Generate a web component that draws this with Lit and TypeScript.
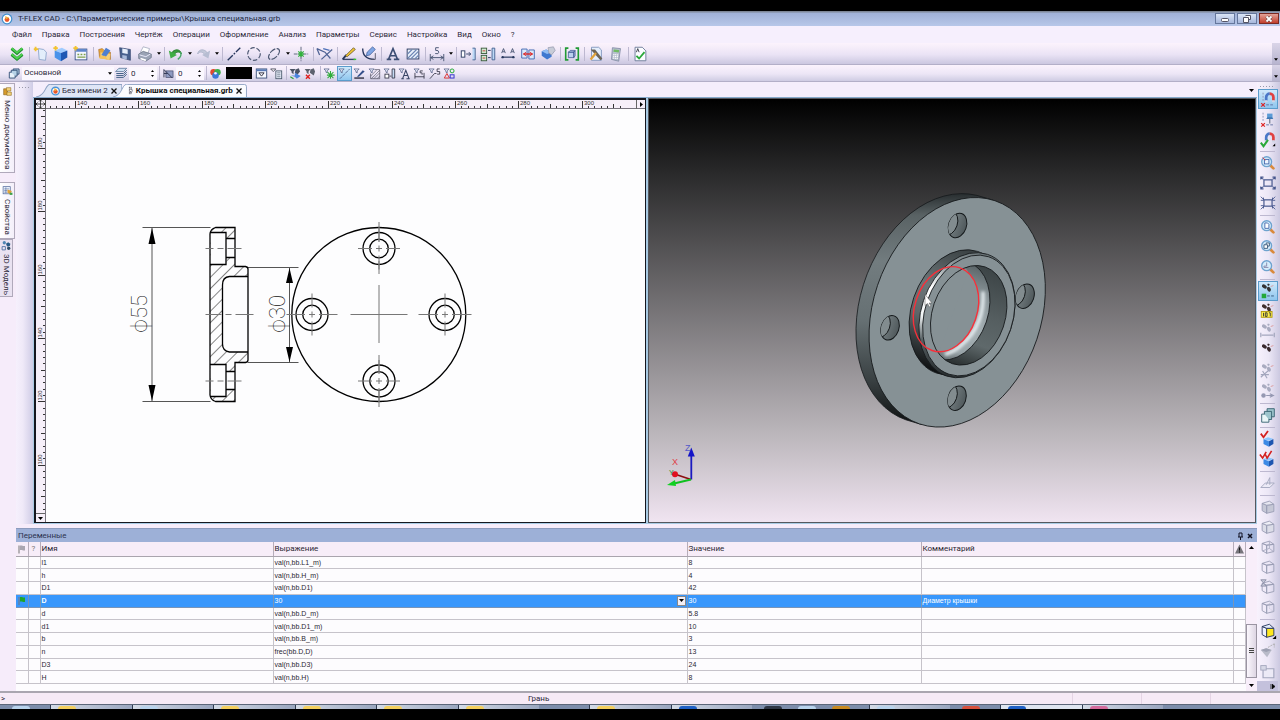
import { LitElement, html, svg, css } from "lit";
import { customElement, property } from "lit/decorators.js";

const N = "#26365c";
const filter = svg`<path d="M1.500 3h8l-3 3v3l-2-1v-2z" fill="#e8ecf8" stroke="#44507a"/>`;
const lens = svg`<path d="M12 12l4 4" stroke="#d98a3c" stroke-width="3" stroke-linecap="round"/><circle cx="8.500" cy="8.500" r="5.500" fill="#d5ecfb" stroke="#6fa3cf" stroke-width="1.500"/>`;
const feet = (c: string) => svg`<ellipse cx="6" cy="5" rx="3" ry="2" transform="rotate(30 6 5)" fill="${c}"/><ellipse cx="11" cy="8" rx="2.800" ry="2" transform="rotate(60 11 8)" fill="${c}"/><path d="M9.500 2.500l2 1" stroke="${c}" stroke-width="2"/><path d="M13 5l3-1" stroke="#d99" stroke-width="1"/>`;
const wire = (a: string, b: string, extra: unknown = "") => svg`<path d="M3.500 6l5 2v9l-5-3zM8.500 8l8-1v8l-8 2z" fill="${a}" stroke="#9a9db4"/><path d="M3.500 6l8-2.500 5 3.500-8 1z" fill="${b}" stroke="#9a9db4"/>${extra}`;
const cube = svg`<path d="M5 10l5-2 6 2-5 2z" fill="#8cc6ff"/><path d="M5 10l6 2.500v6l-6-3z" fill="#3c8ae6"/><path d="M11 12.500l5-2.500v5.500l-5 3z" fill="#1d56b0"/>`;
const magnet = svg`<path d="M8 12V8a4 4 0 0 1 4-4" fill="none" stroke="#4a78c8" stroke-width="3"/><path d="M12 4a4 4 0 0 1 4 4v4" fill="none" stroke="#e04040" stroke-width="3"/><path d="M6.500 12.500h3M14.500 12.500h3" stroke="#cfd6e6" stroke-width="2"/>`;
const snap = svg`<path d="M4.500 3v10" stroke="#8a93b5" stroke-dasharray="2 1.500"/><path d="M8 16.500h9" stroke="#5d6da0" stroke-dasharray="3 1.500"/><path d="M2.500 14.500l4 4m0-4l-4 4" stroke="#d22" stroke-width="1.300"/>`;

const icons: Record<string, unknown> = {
  logo: svg`<circle cx="10" cy="10" r="9" fill="#3f8fce"/><circle cx="10" cy="10" r="7" fill="#fff"/><circle cx="10" cy="11" r="4" fill="#e8552a"/><path d="M7 5l6 3-5 3z" fill="#f4b23c"/>`,
  chev: svg`<path d="M4 4l6 5 6-5M4 10.500l6 5 6-5" fill="none" stroke="#1c8e2c" stroke-width="3.500"/><path d="M4 3.500l6 5 6-5M4 10l6 5 6-5" fill="none" stroke="#4fd050" stroke-width="2"/>`,
  page: svg`<path d="M7 4l6 1 3 3-1 9-7-1z" fill="#e3eefb" stroke="#8fa6cc"/><path d="M4 2v5M2 4.500h5" stroke="#f2c230" stroke-width="2"/>`,
  cube3: svg`<path d="M3 6l8-3 6 3-7 3z" fill="#9fcbff"/><path d="M3 6l7 3v9l-7-4z" fill="#4a93ea"/><path d="M10 9l7-3v8l-7 4z" fill="#1f58b4"/><path d="M4 1v5M1.500 3.500h5" stroke="#f2c230" stroke-width="2"/>`,
  win: svg`<rect x="3.500" y="4.500" width="13" height="12" fill="#f4f7ff" stroke="#3c5488"/><path d="M4 6h12" stroke="#5f86cc" stroke-width="3"/><path d="M6 10.500h2m1.500 0h2m1.500 0h2M6 13.500h9" stroke="#7fa04c" stroke-width="1.500"/><path d="M4 1v5M1.500 3.500h5" stroke="#f2c230" stroke-width="2"/>`,
  open: svg`<path d="M3 5l4-1 2 2 7 2v8l-12-2z" fill="#e8a63c" stroke="#a56a1c" stroke-width=".7"/><path d="M5 8l11 2-1 7-10-3z" fill="#f7cf76"/><path d="M11 3l5 3-5 7-5-2z" fill="#4f7fd0"/><path d="M3 13l7-1 3 4-9-1z" fill="#f3c25c"/>`,
  save: svg`<path d="M4 3l12 2v12l-11-3z" fill="#48618f" stroke="#2b3d66" stroke-width=".7"/><path d="M7 4l6 1v5l-6-1z" fill="#e6eefb"/><path d="M7 11l5 1v4l-5-1z" fill="#a9bbdc"/>`,
  print: svg`<path d="M8 2l7 2-2 6-8-2z" fill="#fff" stroke="#8a94aa" stroke-width=".7"/><path d="M3 10l5-3 9 3v4l-6 4-8-3z" fill="#9aa3b5" stroke="#5a6478" stroke-width=".7"/><path d="M4 11l7 2 5-3" stroke="#eef" fill="none"/><path d="M5 15l6 2" stroke="#fff" stroke-width="2"/>`,
  undo: svg`<path d="M5 9c3-5 10-5 11 1-2-3-6-3-8 1" fill="#3aa03f" stroke="#267a2c"/><path d="M2 6l2 9 7-4z" fill="#3fae45"/><path d="M15 8q2 4-3 8" stroke="#48a868" stroke-width="1.500" fill="none"/>`,
  redo: svg`<path d="M15 9c-3-5-10-5-11 1 2-3 6-3 8 1" fill="#c3c8da" stroke="#aeb4ca"/><path d="M18 6l-2 9-7-4z" fill="#b7bdd2"/>`,
  line: svg`<path d="M3 17L17 3" stroke="${N}" stroke-width="1.500" stroke-dasharray="8 1.500 2 1.500"/>`,
  circ: svg`<circle cx="10" cy="10" r="7" fill="none" stroke="#4d5872" stroke-width="1.300" stroke-dasharray="5 2"/>`,
  ell: svg`<ellipse cx="10" cy="10" rx="7.500" ry="4" transform="rotate(-45 10 10)" fill="none" stroke="#4d5872" stroke-width="1.300" stroke-dasharray="7 1.500"/>`,
  cross: svg`<path d="M10 2v16M2 10h16" stroke="#555e75" stroke-dasharray="4 1"/><path d="M7 7l6 6m0-6l-6 6M10 6.500v7M6.500 10h7" stroke="#2fb23a" stroke-width="1.300"/>`,
  trim: svg`<path d="M1 4l3 7M1 4l9 4l6 7M6 16L18 5" fill="none" stroke="#4e6294" stroke-width="1.400"/><path d="M8 4l7 2" stroke="#4e70b8" stroke-width="1.400"/>`,
  pen: svg`<path d="M3 16h14" stroke="#384468" stroke-width="1.500"/><path d="M3 16l4-5" stroke="${N}" stroke-width="2"/><path d="M6 12l9-9 2 2-9 8z" fill="#f0c435" stroke="#584a20" stroke-width=".8"/><path d="M15 16h3" stroke="#3c3" stroke-width="1.500"/>`,
  spline: svg`<path d="M3 4q0 12 13 12" fill="none" stroke="${N}" stroke-width="1.500"/><path d="M7 12l1-4 6-6 3 3-6 6z" fill="#7fa5e4" stroke="#3c5a94" stroke-width=".8"/><path d="M17 9v7h-5" fill="none" stroke="#556"/>`,
  bigA: svg`<path d="M3 16h5M11 16h6M5 16L10 4l5 12M7 12h6" fill="none" stroke="#3d4e74" stroke-width="1.800"/>`,
  hatch: svg`<rect x="3.500" y="4.500" width="13" height="11" fill="#eaf1fb" stroke="${N}"/><path d="M4 10l5-5M4 15l10-10M8 15l8-8M12.500 15l4-4" stroke="#6d86b4" stroke-width="1.200"/>`,
  dim: svg`<path d="M2.500 10v8M17.500 10v8M3 14h14M6 12l-3 2 3 2M14 12l3 2-3 2" fill="none" stroke="#44506e"/><path d="M12 3H8.500v3q3.500-.5 3.500 2t-4 1.500" fill="none" stroke="#44506e"/>`,
  ins1: svg`<rect x="2.500" y="6.500" width="4" height="7" fill="#fff" stroke="${N}"/><path d="M8 10h5M11 8l2 2-2 2" fill="none" stroke="${N}"/><path d="M15 3.500h3v13h-3" fill="#bcd8f6" stroke="#44608f"/>`,
  ins2: svg`<rect x="2.500" y="3.500" width="6" height="6" fill="#cfe8cf" stroke="#3b5a3b"/><rect x="2.500" y="11.500" width="6" height="6" fill="#cfe8cf" stroke="#3b5a3b"/><path d="M4 6.500h3M4 14.500h3" stroke="#c33"/><path d="M10 6h3M10 14h3" stroke="${N}"/><path d="M14.500 3.500h3v13h-3z" fill="#bcd8f6" stroke="#44608f"/>`,
  aa: svg`<path d="M3 9l2-5 2 5M13 9l2-5 2 5M4 7.500h2m8 0h2" fill="none" stroke="#44506e"/><path d="M4 13.500h12" stroke="${N}" stroke-width="1.300"/><circle cx="4" cy="13.500" r="1.300" fill="${N}"/><circle cx="16" cy="13.500" r="1.300" fill="${N}"/>`,
  link: svg`<path d="M3 4.500h6v10H3zM11 5.500h6v10h-6z" fill="#dbe9fb" stroke="#3f65b0"/><path d="M5 10h10" stroke="#d22" stroke-width="1.500"/><path d="M8 8l-3 2 3 2M12 8l3 2-3 2" fill="none" stroke="#d22"/>`,
  part: svg`<path d="M3 7l5-2 6 3v5l-5 3-6-4z" fill="#3f78d0"/><path d="M3 7l5-2 6 3-5 2z" fill="#91bdf3"/><path d="M10 3l6-1 2 4-4 5-3-2z" fill="#c8ccd8" stroke="#8a90a4" stroke-width=".7"/>`,
  frame: svg`<path d="M6 3.500H3v13h3M14 3.500h3v13h-3" fill="none" stroke="#229a34" stroke-width="1.800"/><path d="M6 8l2-2h5l-1 2zM6 8h6v6H6zM12 8l1.500-2v6L12 14z" fill="#bcd0ee" stroke="#3a5590" stroke-width=".8"/>`,
  tool: svg`<path d="M5 2.500h8l3 3V17H5z" fill="#e4eefc" stroke="#8095bc"/><path d="M4 5l5 0 8 10-2 2z" fill="#6b6458"/><path d="M4 16l6-7" stroke="#e0a23a" stroke-width="2.500"/>`,
  calc: svg`<path d="M6 3l9 1-2 14-8-2z" fill="#b8c0cf" stroke="#77819a" stroke-width=".8"/><path d="M7.500 5l6 .6-.4 2.600-6-.6z" fill="#6fbb62"/><path d="M7 10.500l5.500.6M6.800 12.500l5.500.6M6.500 14.500l5.500.6" stroke="#fff" stroke-width="1.200" stroke-dasharray="1.300 .8"/>`,
  check: svg`<path d="M4.500 2.500h8l4 4v11h-12z" fill="#fbfcff" stroke="#6a7896"/><path d="M6 8l1.500-4L9 8" fill="none" stroke="#334"/><path d="M6 12l3 3 6-7" fill="none" stroke="#2aa83a" stroke-width="2"/>`,
  layer: svg`<path d="M2 8h9v9H2z" fill="#e8f2fa" stroke="#2f4c74" stroke-width="1.400"/><path d="M5 8V5h9v9h-3M8 5V3h9v8h-3" fill="#b6d2e6" stroke="#2f4c74" stroke-width="1.400"/>`,
  levels: svg`<path d="M2 16h11l5-5M2 13h11l5-5M2 10h11l5-5" fill="none" stroke="#3e5e84" stroke-width="1.500"/><path d="M6 2h12l-5 5H1z" fill="#cfe2f3" stroke="#3e5e84"/>`,
  prio: svg`<rect x="6" y="6" width="11" height="10" fill="#8e9ac0" stroke="#3b4264"/><path d="M3 4l13 13M3 10h6M3 4v12" stroke="#333a55" stroke-width="1.500"/>`,
  rgb: svg`<circle cx="7" cy="8" r="5" fill="#e0492f"/><circle cx="13" cy="8" r="5" fill="#3cae49"/><circle cx="10" cy="13" r="5" fill="#3c78d8"/><circle cx="10" cy="9.500" r="2" fill="#eef"/>`,
  fwin: svg`<rect x="2" y="3" width="16" height="14" fill="#f7f9ff" stroke="#44577f" stroke-width="1.500"/><path d="M2 5h16" stroke="#5779b5" stroke-width="3"/><path d="M6 9h8l-4 5z" fill="none" stroke="#334" stroke-width="1.500"/>`,
  flist: svg`<path d="M1 3h8L5 7z" fill="#fff" stroke="#445" stroke-width="1.300"/><rect x="9" y="6" width="9" height="12" fill="#e8eefa" stroke="#456" stroke-width="1.300"/><path d="M11 9h5m-5 3h5m-5 3h5" stroke="#456"/>`,
  fgo: svg`<path d="M1 3h9L7 7v4L4 9V7zM10 4l5-2 2 5-4 5-4-3z" fill="#4a5364"/><path d="M3 13h6V9l9 5-6 4-3-3" fill="#4c86dd"/><path d="M2 15l5 3" stroke="#2d9e3a" stroke-width="2"/>`,
  fdel: svg`<path d="M1 3h9L7 7v4L4 9V7zM10 4l5-2 2 5-2 6-6-4z" fill="#5c626e"/><path d="M3 12l6 6m0-6l-6 6" stroke="#e02020" stroke-width="2.200"/>`,
  f1: svg`${filter}<path d="M7 8l9 9m0-9l-9 9M11.500 6v12M6 12.500h12" stroke="#2fae3a" stroke-width="1.600"/>`,
  f2: svg`${filter}<path d="M3 18L18 3" stroke="#4a5f8c" stroke-width="1.300" stroke-dasharray="5 1"/>`,
  f3: svg`${filter}<path d="M2 17h15" stroke="#223" stroke-width="2"/><path d="M6 15l9-10 3 2-9 8z" fill="#35508a"/>`,
  f4: svg`${filter}<path d="M10 4h8v14H4v-8" fill="none" stroke="#445"/><path d="M4 14l9-9M5 18L18 5M9 18l9-9M14 18l4-4" stroke="#556"/>`,
  f5: svg`${filter}<rect x="3" y="11" width="6" height="6" fill="#fff" stroke="#334" stroke-width="1.300"/><path d="M14 3h4v14h-4zM10 14h3" fill="#c6dbf4" stroke="#334" stroke-width="1.300"/>`,
  f6: svg`${filter}<path d="M5 18h4m4 0h5M7 18l5-13 5 13M9 13h6" fill="none" stroke="#3a4666" stroke-width="1.600"/>`,
  f7: svg`${filter}<path d="M3 9v9m14-9v9M3 15h14M15 6h-4v3h3v3" fill="none" stroke="#334" stroke-width="1.300"/>`,
  f8: svg`${filter}<path d="M3 18l7-8h3M18 3h-4v4h4v4h-4" fill="none" stroke="#334" stroke-width="1.300"/>`,
  f9: svg`${filter}<path d="M2 17l4-7 4 7z" fill="none" stroke="#d33" stroke-width="1.500"/><circle cx="14" cy="6" r="3" fill="none" stroke="#2a3" stroke-width="1.500"/><rect x="11" y="12" width="6" height="5" fill="none" stroke="#33c" stroke-width="1.500"/>`,
  mag1: svg`${magnet}${snap}`,
  pin: svg`${snap}<path d="M9 4h6v5H9z" fill="#5b9bd6"/><path d="M8 10h8l-1.500-2h-5z" fill="#3f78b4"/><path d="M12 10v5" stroke="#456"/>`,
  mag2: svg`${magnet}<path d="M2 14l3 4 5-7" fill="none" stroke="#2aa83a" stroke-width="2.200"/><path d="M18 15v3h-3z" fill="#000"/>`,
  zoomw: svg`${lens}<rect x="6" y="6" width="5" height="5" fill="#eaf4ff" stroke="#46a"/><path d="M4 4l3 3" stroke="#d33"/>`,
  fit: svg`<rect x="5.500" y="6.500" width="9" height="7" fill="none" stroke="#44558c" stroke-width="1.300"/><path d="M5 6L2 4M15 6l3-2M5 14l-3 2M15 14l3 2M2 6V3.500h3M18 6V3.500h-3M2 14v2.500h3M18 14v2.500h-3" stroke="#44558c" stroke-width="1.200" fill="none"/>`,
  fit2: svg`<rect x="5.500" y="6.500" width="9" height="7" fill="none" stroke="#44558c" stroke-width="1.300"/><path d="M2 3l3 3M18 3l-3 3M2 17l3-3M18 17l-3-3M2 7h3V4M18 7h-3V4M2 13h3v3M18 13h-3v3" stroke="#44558c" fill="none"/>`,
  zpage: svg`${lens}<path d="M6.500 5.500h3l1.500 1.500v4.500H6.500z" fill="#fff" stroke="#46a"/>`,
  zwin: svg`${lens}<path d="M5.500 7.500h4v4h-4zM8 7V5.500h3.500V9H10" fill="#fff" stroke="#357"/>`,
  zback: svg`${lens}<path d="M8.500 5v4H5.500v1.500h5" fill="none" stroke="#88a"/>`,
  feet1: svg`${feet("#333")}<rect x="3" y="13" width="5" height="5" fill="#22a83a"/><path d="M9 15.500h8" stroke="#357" stroke-dasharray="3 1.500"/>`,
  feet2: svg`${feet("#40302e")}<rect x="2.500" y="10.500" width="12" height="6.500" fill="#fff04a" stroke="#b09a10"/><path d="M5 12v4M7 12h2v4H7zM11 12h1.500v4" fill="none" stroke="#333"/>`,
  feet3: svg`${feet("#a9abc0")}<path d="M2 12v5M17 12v5M3 14.500h13" stroke="#a3a6bd" stroke-width="1.300"/>`,
  feet4: svg`${feet("#3a2a2e")}`,
  feet5: svg`${feet("#a9abc0")}<path d="M2 17l9-8M4 10l5 8M2 14h9" stroke="#a3a6bd" stroke-width="1.300"/>`,
  feet6: svg`${feet("#a9abc0")}<circle cx="5" cy="15" r="2.500" fill="#9598b2"/><path d="M8 15h7M12 13l4 2-4 2" fill="none" stroke="#9598b2" stroke-width="1.300"/>`,
  stack: svg`<path d="M3 9h8v9H3z" fill="#eaf6f8" stroke="#33606e"/><path d="M6 9V6h8v9h-3M9 6V3h8v9h-3" fill="#9cc4cc" stroke="#33606e"/>`,
  chk1: svg`${cube}<path d="M2 4l3 4 5-7" fill="none" stroke="#d32020" stroke-width="2"/>`,
  chk2: svg`${cube}<path d="M1 5l3 4 4-7M7 5l2 4 5-8" fill="none" stroke="#d32020" stroke-width="1.800"/>`,
  plane: svg`<path d="M2 15h10l5-5H7zM8 12l4-8v8" fill="#eceaf6" stroke="#a3a6bd"/>`,
  w1: wire("#c6c8d6", "#e6e6f0"), w2: wire("#dcdde8", "#eeeef6"),
  w3: wire("none", "none", svg`<path d="M11.500 3.500v8l5 4M11.500 11.500l-8 3" stroke="#a9acc2" fill="none"/>`),
  w4: wire("none", "none"),
  w5: wire("none", "none", svg`<path d="M2 2h6L2 9h6z" fill="#c8cada" stroke="#8a8da6"/>`),
  w6: wire("none", "none", svg`<path d="M11.500 3.500v8l5 4" stroke="#c0c2d2" stroke-dasharray="1 1" fill="none"/>`),
  ycube: svg`<path d="M3.500 5l5 2v10l-5-3z" fill="#eef2ff" stroke="${N}"/><path d="M8.500 7h8v8l-8 2z" fill="#ffe81e" stroke="${N}"/><path d="M3.500 5l8-2.500 5 4.500-8 0z" fill="#e2eafa" stroke="${N}"/><path d="M19 15v4h-4z" fill="#000"/>`,
  arrowd: svg`<path d="M2 9l6-2 6 2-5 8z" fill="#b9bbc9"/><path d="M2 9l6-2 6 2-6 2z" fill="#9da0b2"/><path d="M10 6l7-4M17 2v4" stroke="#aaa" stroke-dasharray="2 1"/>`,
  boxp: svg`<path d="M4.500 7.500h12v10h-12z" fill="#eceaf6" stroke="#a3a6bd" stroke-width="1.300"/><rect x="2" y="4" width="6" height="5" fill="#d7d8e6" stroke="#a3a6bd"/>`,
  doc: svg`<circle cx="10" cy="11" r="7" fill="#fff" stroke="#4a94d8" stroke-width="2.500"/><circle cx="10" cy="12" r="4" fill="#e8552a"/><path d="M8 5l5 4-5 3z" fill="#f4b23c"/>`,
  flange: svg`<path d="M6 1v18M6 2h5v4H7M7 14h4v4H6M6 7h7v6H7" fill="none" stroke="#334" stroke-width="1.600" stroke-dasharray="3 1"/>`,
  docs: svg`<path d="M3 5h7v11H3z" fill="#d79b2c" stroke="#7c5a16"/><path d="M8 3h8v6H8zM9 11h8v6H9z" fill="#f3d37a" stroke="#8a6416"/>`,
  props: svg`<rect x="2" y="3" width="13" height="13" fill="#eaf1fc" stroke="#51689a" stroke-width="1.300"/><path d="M4 7h9M4 10h6M4 13h6M7 4v11" stroke="#51689a"/><path d="M10 8l8 3-3 6-5-3z" fill="#e0a23a"/><path d="M14 14h5v4h-5z" fill="#3fa24a"/>`,
  model: svg`<path d="M2 12h6v6H2z" fill="none" stroke="#43699c" stroke-width="1.500"/><path d="M9 7l4-3 4 3-1 4-5 1z" fill="#285a86"/><circle cx="6" cy="5" r="3" fill="#4f86b4"/><circle cx="14" cy="15" r="3" fill="#2c4b66"/>`,
};
const ic = (n: string) => html`<svg class="ic" viewBox="0 0 20 20" aria-hidden="true">${icons[n]}</svg>`;
const tri = html`<svg class="tri" viewBox="0 0 5 3" aria-hidden="true"><path d="M0 0h5L2.500 3z"/></svg>`;

const shared = css`
  :host, * { box-sizing: border-box; }
  button, input, select { font: inherit; color: inherit; border: 0; padding: 0; margin: 0; background: none; border-radius: 0; min-width: 0; outline: 0; }
  svg { display: block; }
  .ic { width: 100%; height: 100%; }
  .tri { width: 5px; height: 3px; flex: none; }
`;

@customElement("cad-drawing")
class CadDrawing extends LitElement {
  static styles = [shared, css`
    :host { display: grid; grid-template: 9px minmax(0, 1fr) / 10px minmax(0, 1fr); background: #fdfdfe; border: 2px solid #15171f; border-width: 2px 1px 1px 2px; min-width: 0; min-height: 0; overflow: hidden; }
    .corner { border: solid #555; border-width: 0 1px 1px 0; background: #f6f1fa; }
    .top, .left { display: flex; background: #f6eff9; min-width: 0; min-height: 0; }
    .top { border-bottom: 1px solid #77737e; }
    .left { border-right: 1px solid #77737e; flex-direction: column; }
    .scale { flex: 1; min-width: 0; min-height: 0; overflow: hidden; }
    .scale svg { width: 100%; height: 100%; }
    .scale text { font: 6px "Liberation Sans", sans-serif; fill: #333; }
    .scale path { stroke: #333; }
    .end { display: grid; place-items: center; width: 9px; height: 9px; border-left: 1px solid #666; }
    .left .end { border-left: 0; border-top: 1px solid #666; }
    .end svg { width: 5px; height: 5px; }
    .sheet { width: 100%; height: 100%; min-height: 0; }
    .thin { stroke: #555; stroke-width: 1; fill: none; }
    .axis { stroke: #777; stroke-width: 1; fill: none; }
    .thick { stroke: #000; stroke-width: 1.300; fill: none; }
    .size { font: 100 22px Roboto, "Noto Sans", sans-serif; fill: #111; }
  `];
  render() {
    const xs = Array.from({ length: 91 }, (_, i) => i - 4);
    const ys = Array.from({ length: 65 }, (_, i) => i - 6);
    return html`
      <div class="corner"><svg viewBox="0 0 9 8"><path d="M4.500 0v8M0 4h9M3 1.500L4.500 0 6 1.500M3 6.500L4.500 8 6 6.500M1.500 2.500L0 4l1.500 1.500M7.500 2.500L9 4 7.500 5.500" stroke="#222" stroke-width=".8" fill="none"/></svg></div>
      <div class="top">
        <div class="scale"><svg>${xs.map((i) => {
          const x = Math.round(29 + i * 6.333) + 0.5;
          const h = i % 10 === 0 ? 7 : i % 5 === 0 ? 4 : 2;
          return svg`<path d="M${x} 8v${-h}"/>${i % 10 === 0 ? svg`<text x=${x + 1.5} y="5">${140 + i * 2}</text>` : ""}`;
        })}</svg></div>
        <div class="end"><svg viewBox="0 0 5 5"><path d="M1 0l3 2.500L1 5z"/></svg></div>
      </div>
      <div class="left">
        <div class="scale"><svg>${ys.map((i) => {
          const y = Math.round(39 + i * 6.333) + 0.5;
          const h = i % 10 === 0 ? 7 : i % 5 === 0 ? 4 : 2;
          return svg`<path d="M9 ${y}h${-h}"/>${i % 10 === 0 && i < 60 ? svg`<text transform="translate(6 ${y - 1}) rotate(-90)">${200 - i * 2}</text>` : ""}`;
        })}</svg></div>
        <div class="end"><svg viewBox="0 0 5 5"><path d="M0 1h5L2.500 4z"/></svg></div>
      </div>
      <svg class="sheet" viewBox="46 109 598 413" role="img" aria-label="Чертёж">
        <defs><pattern id="h" width="8" height="8" patternUnits="userSpaceOnUse" patternTransform="rotate(45)"><path d="M.5 0v8" stroke="#777" stroke-width=".9"/></pattern></defs>
        <path fill="url(#h)" d="M214 227.500H234.500V239H226V232H210V264H226V257H234.500V266.500H247.500V276.500H229Q222 278 222 285V344Q222 351 229 352H247.500V362.500H234.500V371H226V364H210V396H226V390H234.500V401.500H214L209.500 396V233z"/>
        <path class="thin" d="M142 227.500H210M142 401.500H210M151.500 228V401M247 267.500H298M247 362.500H298M289 268V362"/>
        <path d="M151.500 228l-3.500 16h7zM151.500 401l-3.500-16h7zM289 268l-3.500 15h7zM289 362l-3.500-15h7z"/>
        <path class="thick" d="M215 227.500H234.500V266.500H245Q247.500 267 247.500 269V360Q247.500 362 245 362.500H234.500V401.500H215Q210 400 209.500 395V234Q210 229 215 227.500zM209.500 232.500H225.500V264.500H209.500M225.500 238.500H234.500M225.500 257.500H234.500M209.500 364.500H225.500V396.500H209.500M225.500 371.500H234.500M225.500 389.500H234.500M247.500 276.500H229Q222 277 222 285V344Q222 351 229 352H247.500"/>
        <circle class="thick" cx="378.300" cy="314.500" r="87"/>
        ${[[378.5, 248.5], [378.5, 381], [311.5, 314.5], [444.5, 314.5]].map(([x, y]) => svg`
          <circle class="thick" cx=${x} cy=${y} r="16"/><circle class="thick" cx=${x} cy=${y} r="9.300"/>
          <path class="axis" d="M${x - 21} ${y}h14m4 0h6m4 0h14M${x} ${y - 21}v14m0 4v6m0 4v14"/>`)}
        <path class="axis" d="M205 248.500h8m4 0h6m4 0h14M205 381h8m4 0h6m4 0h14M205 314.500h16m4 0h6m4 0h18M378.500 222v20M378.500 261v13M378.500 285v58M378.500 355v18M378.500 390v17M286 314.500h18M325 314.500h12M350 314.500h57M418 314.500h14M455 314.500h16"/>
        <text class="size" transform="translate(146 333) rotate(-90)">ϕ55</text>
        <text class="size" transform="translate(284 333) rotate(-90)">ϕ30</text>
      </svg>`;
  }
}

@customElement("cad-scene")
class CadScene extends LitElement {
  static styles = [shared, css`
    :host { display: block; min-width: 0; min-height: 0; overflow: hidden; background: linear-gradient(#000, #2d2d2e 19%, #bdb8bd 80%, #f0e4f1); border: 1px solid #55585f; }
    .view { width: 100%; height: 100%; }
    .edge { stroke: #14181a; stroke-width: .8; fill: none; }
    .face { stroke: #14181a; stroke-width: .8; fill: #869195; }
    .lbl { font: 9px "Liberation Sans", sans-serif; }
    .z { fill: #5458c8; } .x { fill: #e04048; } .y { fill: #2a9030; font-size: 7px; }
  `];
  render() {
    const holes = [[957.5, 226], [890, 328.3], [1025, 296.7], [957, 398.7]];
    return html`<svg class="view" viewBox="649 100 606 422" role="img" aria-label="3D">
      <defs>
        <linearGradient id="side" x1="0" y1="192" x2="0" y2="427" gradientUnits="userSpaceOnUse"><stop offset="0" stop-color="#23282a"/><stop offset=".1" stop-color="#596264"/><stop offset=".3" stop-color="#727c7f"/><stop offset=".55" stop-color="#667073"/><stop offset=".8" stop-color="#3a4143"/><stop offset="1" stop-color="#0c0e0f"/></linearGradient>
        <linearGradient id="boss" x1="0" y1="250" x2="0" y2="378" gradientUnits="userSpaceOnUse"><stop offset="0" stop-color="#3a4143"/><stop offset=".35" stop-color="#6c7679"/><stop offset=".6" stop-color="#5d6669"/><stop offset="1" stop-color="#0c0e0f"/></linearGradient>
        <linearGradient id="rim" x1="0" y1="253" x2="0" y2="378" gradientUnits="userSpaceOnUse"><stop offset="0" stop-color="#6d777a"/><stop offset=".2" stop-color="#9aa4a8"/><stop offset=".38" stop-color="#fff"/><stop offset=".62" stop-color="#f2f6f7"/><stop offset=".8" stop-color="#5a6366"/><stop offset="1" stop-color="#2b3133"/></linearGradient>
        <linearGradient id="bore" x1="0" y1="266" x2="0" y2="366" gradientUnits="userSpaceOnUse"><stop offset="0" stop-color="#3d4547"/><stop offset=".45" stop-color="#555e60"/><stop offset=".75" stop-color="#5f696b"/><stop offset="1" stop-color="#2c3233"/></linearGradient>
        <linearGradient id="fil" x1="0" y1="262" x2="0" y2="364" gradientUnits="userSpaceOnUse"><stop offset="0" stop-color="#5d676a"/><stop offset=".25" stop-color="#8b969a"/><stop offset=".6" stop-color="#a5b0b4"/><stop offset=".85" stop-color="#98a3a7"/><stop offset="1" stop-color="#4e5759"/></linearGradient>
        <linearGradient id="hole" x1="0" x2="1"><stop offset="0" stop-color="#7a8487"/><stop offset="1" stop-color="#4f585b"/></linearGradient>
        <filter id="soft" x="-30%" y="-30%" width="160%" height="160%"><feGaussianBlur stdDeviation="1.800"/></filter>
        <clipPath id="bc"><ellipse cx="968.700" cy="315.800" rx="36.500" ry="51.100" transform="rotate(18.700 968.700 315.800)"/></clipPath>
        ${holes.map(([x, y], i) => svg`<clipPath id="c${i}"><ellipse cx=${x} cy=${y} rx="8.900" ry="12.600" transform="rotate(18.700 ${x} ${y})"/></clipPath>`)}
      </defs>
      <g fill="url(#side)">
        <path stroke="#14181a" stroke-width=".8" d="M992.800 200.600L977 195.900A84.100 117.800 18.700 0 0 905.800 420.300L921.600 425z"/>
      </g>
      <ellipse class="face" cx="957.200" cy="312.800" rx="84.100" ry="117.800" transform="rotate(18.700 957.200 312.800)"/>
      ${holes.map(([x, y], i) => svg`
        <ellipse cx=${x} cy=${y} rx="8.900" ry="12.600" transform="rotate(18.700 ${x} ${y})" fill="url(#hole)" stroke="#14181a"/>
        <g clip-path="url(#c${i})"><ellipse cx=${x - 9} cy=${y - 2.5} rx="8.900" ry="12.600" transform="rotate(18.700 ${x - 9} ${y - 2.5})" fill="#828c8f" stroke="#14181a" stroke-width=".9"/></g>`)}
      <ellipse fill="url(#boss)" stroke="#14181a" stroke-width=".8" cx="957.200" cy="312.800" rx="45.900" ry="64.200" transform="rotate(18.700 957.200 312.800)"/>
      <path fill="url(#boss)" d="M976.600 251.700L986.400 254.600L947.600 376.800L937.800 373.900z"/>
      <ellipse fill="url(#rim)" stroke="#14181a" stroke-width=".8" cx="967" cy="315.700" rx="45.900" ry="64.200" transform="rotate(18.700 967 315.700)"/>
      <ellipse class="face" cx="968.800" cy="316" rx="44" ry="62" transform="rotate(18.700 968.800 316)"/>
      <ellipse fill="url(#bore)" cx="968.700" cy="315.800" rx="36.500" ry="51.100" transform="rotate(18.700 968.700 315.800)"/>
      <g clip-path="url(#bc)">
        <ellipse fill="url(#fil)" stroke="#14181a" stroke-width=".8" cx="951.700" cy="310.800" rx="36.500" ry="51.100" transform="rotate(18.700 951.700 310.800)"/>
        <path d="M983 292Q985 325 962 345Q955 352 945 355" fill="none" stroke="#e4ecef" stroke-width="3.500" filter="url(#soft)"/>
        <ellipse fill="#869195" cx="946" cy="309.700" rx="31.200" ry="43.600" transform="rotate(18.700 946 309.700)"/>
        <path fill="#869195" d="M925 270L962 264L968 272L940 350L930 352z"/>
      </g>
      <ellipse class="edge" cx="968.700" cy="315.800" rx="36.500" ry="51.100" transform="rotate(18.700 968.700 315.800)"/>
      <ellipse fill="none" stroke="#f8303a" stroke-width="1.400" cx="946" cy="309.700" rx="31.200" ry="43.600" transform="rotate(18.700 946 309.700)"/>
      <path d="M925 295v11l2.500-2 2 3.500 1.500-1-2-3h3z" fill="#fff" stroke="#555" stroke-width=".5"/>
      <path d="M691.300 480V456" stroke="#1a1ac0" stroke-width="1.800"/><path d="M691.300 448l-3.500 9h7z" fill="#1414c8"/>
      <path d="M691 480l-15-5" stroke="#8c1010" stroke-width="1.800"/><circle cx="675" cy="474.800" r="3" fill="#e01020"/>
      <path d="M691 480l-17 4" stroke="#10c020" stroke-width="1.800"/><path d="M667 485.500l8-5 1 6z" fill="#10d020"/>
      <text class="lbl z" x="685" y="451">Z</text><text class="lbl x" x="672" y="465">X</text><text class="lbl y" x="669" y="475">Y</text>
    </svg>`;
  }
}

@customElement("cad-variables")
class CadVariables extends LitElement {
  @property({ attribute: false }) rows: string[][] = [];
  static styles = [shared, css`
    :host { display: flex; flex-direction: column; min-height: 0; background: #fdfcfe; font: 8px/12px Roboto, "Noto Sans", sans-serif; color: #2b2733; }
    .title { display: flex; align-items: center; height: 14px; flex: none; padding: 0 2px; background: #9db0d7; border-top: 1px solid #8c9bbd; color: #2c3350; }
    .title h2 { font: inherit; margin: 0; flex: 1; }
    .tool { width: 10px; height: 10px; }
    .body { flex: 1; display: flex; min-height: 0; }
    .data { flex: 1; min-width: 0; padding: 0 0 7px; background: linear-gradient(#f7edf8 15px, transparent 15px); }
    table { width: 100%; height: 100%; border-collapse: collapse; table-layout: fixed; }
    th { font-weight: 400; text-align: left; height: 14px; padding: 0 1px; line-height: 12px; border-right: 1px solid #b6adba; border-bottom: 1px solid #a9a4ad; }
    td { padding: 0 1px; font: 7px/11px "Liberation Sans", sans-serif; border: solid #c6c3ca; border-width: 0 1px 1px 0; white-space: nowrap; overflow: hidden; }
    .flag { width: 12px; } .q { width: 12px; color: #777; padding-left: 3px; } .name { width: 233px; } .expr { width: 414px; } .val { width: 234px; } .warn { width: 12px; }
    .mark { width: 9px; height: 10px; }
    td svg.mark { height: 9px; }
    .sel td { background: #3897fc; color: #fff; border-color: #7894b8; }
    .sel .nm { font-weight: 700; }
    .combo { display: flex; align-items: center; }
    .combo span { flex: 1; }
    .drop { width: 9px; height: 10px; background: #f4eff6; border: 1px solid #888; display: grid; place-items: center; }
    .bar { width: 11px; flex: none; background: #f8eefa; display: flex; flex-direction: column; align-items: center; padding: 4px 0; color: #111; }
    .bar .up { transform: rotate(180deg); }
    .track { flex: 1; width: 100%; display: flex; flex-direction: column; justify-content: end; padding-bottom: 6px; }
    .thumb { height: 42%; border: 1px solid #9a94a2; background: linear-gradient(90deg, #fbf7fd, #ddd5e3); display: grid; place-items: center; }
    .thumb svg { width: 5px; height: 5px; }
  `];
  render() {
    const flag = (c: string) => html`<svg class="mark" viewBox="0 0 9 9" aria-hidden="true"><path d="M2 1v8" stroke="#777"/><path d="M3 1h2.500v.5H8v4.500H5.500V5.500H3z" fill=${c}/></svg>`;
    return html`
      <div class="title"><h2>Переменные</h2>
        <button class="tool" aria-label="Закрепить"><svg viewBox="0 0 10 10"><path d="M3 6h5M4 6V2h3v4M5.500 6v3" fill="none" stroke="#112"/></svg></button>
        <button class="tool" aria-label="Закрыть"><svg viewBox="0 0 10 10"><path d="M3 3l4 4m0-4L3 7" stroke="#112" stroke-width="1.500"/></svg></button>
      </div>
      <div class="body"><div class="data"><table>
        <thead><tr><th class="flag">${flag("#aaa6b0")}</th><th class="q">?</th><th class="name">Имя</th><th class="expr">Выражение</th><th class="val">Значение</th><th>Комментарий</th>
          <th class="warn"><svg class="mark" viewBox="0 0 9 9"><path d="M4.500 0L9 9H0z" fill="#77757c"/><path d="M4.500 3v3m0 1v1" stroke="#111"/></svg></th></tr></thead>
        <tbody>${this.rows.map(([n, e, v, c]) => html`<tr class=${c ? "sel" : ""}><td>${c ? flag("#1fa52c") : ""}</td><td></td><td class="nm">${n}</td>
          <td>${c ? html`<div class="combo"><span>${e}</span><button class="drop" aria-label="Список">${tri}</button></div>` : e}</td><td>${v}</td><td>${c}</td><td></td></tr>`)}</tbody>
      </table></div>
      <div class="bar"><svg class="tri up" viewBox="0 0 5 3"><path d="M0 0h5L2.500 3z"/></svg><div class="track"><div class="thumb"><svg viewBox="0 0 5 5"><path d="M0 .5h5M0 2.500h5M0 4.500h5" stroke="#444"/></svg></div></div>${tri}</div></div>`;
  }
}

@customElement("app-root")
class AppRoot extends LitElement {
  static styles = [shared, css`
    :host { display: flex; flex-direction: column; height: 100vh; padding: 11px 0; background: #000; overflow: hidden; font: 8px/12px Roboto, "Noto Sans", sans-serif; color: #2b2838; }
    .title { display: flex; align-items: center; height: 15px; flex: none; padding: 0 1px 0 1px; gap: 5px; background: linear-gradient(#7e8796 1px, #a0b1d6 2px, #b7c7e9); color: #1d2740; }
    .title h1 { font: inherit; margin: 0; flex: 1; }
    .logo { width: 12px; height: 12px; }
    .wins { display: flex; gap: 2px; }
    .wins button { width: 20px; height: 11px; border: 1px solid #65779c; background: linear-gradient(#dbe5f6, #a6b7dc); display: grid; place-items: center; }
    .wins button.close { background: linear-gradient(#e2a398, #c23e2c); border-color: #7a2a22; }
    .wins svg { width: 10px; height: 8px; }
    .menu { display: flex; align-items: center; height: 17px; flex: none; padding: 0 12px; gap: 10px; background: #f6effd; }
    .bar { display: flex; align-items: center; flex: none; }
    .bar .tri { width: 4px; }
    .bar1 { height: 22px; padding-left: 7px; background: linear-gradient(#fcf3fc, #eae3f5 55%, #cbc7e0); border-bottom: 1px solid #b3afc8; }
    .bar2 { height: 17px; padding-left: 7px; background: linear-gradient(#fbf3fd, #ece6f6 55%, #cfcce3); border-bottom: 1px solid #b3afc8; }
    .grow { flex: 1; }
    .more { width: 8px; align-self: stretch; background: linear-gradient(#dad5e8, #b7b4cf); display: grid; place-items: end center; padding-bottom: 3px; }
    .b { width: 20px; height: 20px; flex: none; padding: 1px; }
    .ar { width: 7px; height: 20px; flex: none; display: grid; place-items: center; }
    .tabs .ar { height: 13px; }
    .sep { width: 4px; height: 14px; flex: none; display: flex; justify-content: center; }
    .sep::before { content: ""; width: 1px; background: #bdb8d0; }
    .s { width: 15px; height: 15px; flex: none; padding: 1px; }
    .on { background: linear-gradient(#cfe9fb, #8ec6ee); border: 1px solid #5a9ccc; padding: 0; }
    .field { display: flex; align-items: center; height: 13px; background: #fbf8fe; padding: 0 2px; }
    .field select { appearance: none; flex: 1; height: 13px; }
    .field input { width: 100%; height: 13px; }
    .style { width: 92px; }
    .num { width: 28px; }
    .spin { width: 5px; height: 9px; flex: none; }
    .color { width: 26px; height: 12px; background: #000; margin: 0 2px 0 3px; }
    .main { flex: 1; min-height: 0; display: grid; grid-template-columns: 16px minmax(0, 1fr) 23px; background: #f6ecfa; }
    .docks { display: flex; flex-direction: column; align-items: start; padding-top: 1px; }
    .dock { writing-mode: vertical-rl; display: flex; align-items: center; gap: 3px; width: 15px; line-height: 14px; border: 1px solid #b0a9bb; border-left: 0; background: linear-gradient(90deg, #fff, #f4effa); padding: 2px 0 3px; }
    .dock .ic { width: 11px; height: 11px; }
    .dock + .dock { margin-top: 9px; }
    .dock.low { margin-top: 0; width: 13px; background: #e9e2f1; padding: 0 0 1px; }
    .center { display: flex; flex-direction: column; min-width: 0; min-height: 0; }
    .work { flex: 1; min-height: 0; display: grid; grid-template-columns: 17px minmax(0, 1fr); margin-bottom: 4px; }
    .strip { background: linear-gradient(90deg, #f6f0fc, #efe9f8 40%, #cfcce6); padding: 5px 3px; }
    .dots { height: 1px; background: repeating-linear-gradient(90deg, #99a 0 1px, transparent 1px 3px); }
    .docs { display: flex; flex-direction: column; min-width: 0; min-height: 0; }
    .tabs { display: flex; height: 16px; flex: none; padding: 2px 2px 0 3px; border-bottom: 1px solid #86aacb; background: #f5eefc; }
    .tab { position: relative; display: flex; align-items: center; gap: 1px; padding: 0 4px 0 14px; }
    .tab + .tab { margin-left: -9px; padding-right: 4px; }
    .tab .bg { position: absolute; left: 0; top: 0; width: 100%; height: 100%; z-index: 0; }
    .tab > :not(.bg) { position: relative; }
    .tab .ic { width: 11px; height: 11px; }
    .tab + .tab .ic { width: 8px; }
    .tab b { font-weight: 700; color: #111; }
    .tab .x { width: 8px; height: 8px; margin-left: 1px; }
    .views { flex: 1; min-height: 0; display: grid; grid-template-columns: minmax(0, 612fr) minmax(0, 608fr); gap: 2px; padding: 0 1px 1px 1px; background: #a9cbe4; }
    .vars { flex: none; height: 163px; }
    .tools { display: flex; flex-direction: column; align-items: center; padding: 4px 2px 0 0; background: linear-gradient(90deg, #f8f2fd, #ece7f6 50%, #cbc8e0); }
    .tools .dots { width: 15px; margin-bottom: 2px; }
    .tools .sep { width: 15px; height: 4px; align-items: center; }
    .tools .sep::before { width: 100%; height: 1px; }
    .tools .foot { flex: 1; align-self: stretch; display: grid; place-items: center end; background: #c4c1dc; padding-right: 3px; }
    .foot svg { width: 5px; height: 5px; }
    .status { display: flex; align-items: center; height: 13px; flex: none; border-top: 2px solid #aaa6b0; background: #f6eaf6; padding: 0 1px; line-height: 11px; }
    .status .cell { width: 69px; height: 11px; border-left: 1px solid #e4d4e4; }
    .taskbar { display: flex; height: 5px; flex: none; background: #7d8dab; border-top: 1px solid #5c6679; overflow: hidden; }
    .task { flex: 83 1 0; padding-left: 7px; border-left: 1px solid #2f3a50; background: linear-gradient(90deg, #d3dae6, #9aa6bf); }
    .task.light { background: #dfe5f0; }
    .gap { flex: 43 1 0; padding-left: 12px; } .gap.big { flex-grow: 118; display: flex; gap: 16px; }
    .chip { display: block; width: 18px; height: 4px; margin-top: 1px; border-radius: 3px 3px 0 0; }
    .yellow { background: #f4cf5e; } .blue { background: #1f5fc4; } .pale { background: #b9d3ec; } .red { background: #d8503c; } .amber { background: #c98a20; } .dark { background: #2e3544; } .pink { background: #d46a9c; }
  `];
  render() {
    const btn = (n: string, cls = "b") => n === "|" ? html`<span class="sep"></span>` : n === "v" ? html`<button class="ar" aria-label="Ещё">${tri}</button>` : html`<button class=${cls} aria-label=${n}>${ic(n)}</button>`;
    const row1 = "chev | page cube3 win | open save print v | undo v redo v | line circ ell v cross | trim | pen spline | bigA hatch | dim v | ins1 ins2 aa link part | frame | tool calc | check".split(" ");
    const side = "mag1 pin mag2 | zoomw fit fit2 | zpage zwin zback | feet1 feet2 feet3 feet4 feet5 feet6 | stack | chk1 chk2 | plane | w1 w2 w3 w4 w5 w6 | ycube arrowd boxp".split(" ");
    const spin = html`<svg class="spin" viewBox="0 0 5 9" aria-hidden="true"><path d="M1 3l1.500-2L4 3zM1 6l1.500 2L4 6z"/></svg>`;
    const x = html`<svg class="x" viewBox="0 0 8 8" aria-hidden="true"><path d="M1.500 1.500l5 5m0-5l-5 5" stroke="#111" stroke-width="1.300"/></svg>`;
    const rows = [["l1", "val(n,bb.L1_m)", "8", ""], ["h", "val(n,bb.H_m)", "4", ""], ["D1", "val(n,bb.D1)", "42", ""], ["D", "30", "30", "Диаметр крышки"], ["d", "val(n,bb.D_m)", "5.8", ""], ["d1", "val(n,bb.D1_m)", "10", ""], ["b", "val(n,bb.B_m)", "3", ""], ["n", "frec(bb.D,D)", "13", ""], ["D3", "val(n,bb.D3)", "24", ""], ["H", "val(n,bb.H)", "8", ""]];
    const task = (c: string, light = "") => html`<span class="task ${light}"><i class="chip ${c}"></i></span>`;
    return html`
      <header class="title"><span class="logo">${ic("logo")}</span><h1>T-FLEX CAD - C:\\Параметрические примеры\\Крышка специальная.grb</h1>
        <div class="wins"><button aria-label="Свернуть"><svg viewBox="0 0 10 8"><rect x="1.500" y="3.500" width="7" height="3" rx="1" fill="#fff" stroke="#556"/></svg></button>
        <button aria-label="Восстановить"><svg viewBox="0 0 10 8"><path d="M3.500.5h5v4h-2M1.500 2.500h5v5h-5z" fill="#fff" stroke="#556"/></svg></button>
        <button class="close" aria-label="Закрыть"><svg viewBox="0 0 10 8"><path d="M2.500 1.500l5 5m0-5l-5 5" stroke="#644" stroke-width="3"/><path d="M2.500 1.500l5 5m0-5l-5 5" stroke="#fff" stroke-width="1.800"/></svg></button></div>
      </header>
      <nav class="menu">${["Файл", "Правка", "Построения", "Чертёж", "Операции", "Оформление", "Анализ", "Параметры", "Сервис", "Настройка", "Вид", "Окно", "?"].map((m) => html`<button>${m}</button>`)}</nav>
      <div class="bar bar1">${row1.map((n) => btn(n))}<span class="grow"></span><button class="more" aria-label="Параметры панели">${tri}</button></div>
      <div class="bar bar2">${btn("layer", "s")}
        <label class="field style"><select aria-label="Слой"><option>Основной</option></select>${tri}</label>
        ${btn("levels", "s")}<label class="field num"><input aria-label="Уровень" value="0">${spin}</label>
        <span class="sep"></span>${btn("prio", "s")}<label class="field num"><input aria-label="Приоритет" value="0">${spin}</label>
        <span class="sep"></span>${btn("rgb", "s")}<button class="color" aria-label="Цвет"></button>
        ${["fwin", "flist", "|", "fgo", "fdel", "|", "f1"].map((n) => btn(n, "s"))}${btn("f2", "s on")}${["f3", "f4", "f5", "f6", "f7", "f8", "f9"].map((n) => btn(n, "s"))}
        <span class="grow"></span><button class="more" aria-label="Параметры панели">${tri}</button></div>
      <main class="main">
        <div class="docks"><button class="dock">${ic("docs")}Меню документов</button><button class="dock">${ic("props")}Свойства</button><button class="dock low">${ic("model")}3D Модель</button></div>
        <div class="center">
          <div class="work">
            <div class="strip"><div class="dots"></div></div>
            <div class="docs">
              <div class="tabs">
                <button class="tab"><svg class="bg" viewBox="0 0 84 14" preserveAspectRatio="none"><path d="M0 14Q6 13 9 6T15 .5H84V14" fill="#dfe6f6" stroke="#8fa3c4"/></svg>${ic("doc")}<span>Без имени 2</span>${x}</button>
                <button class="tab"><svg class="bg" viewBox="0 0 137 14" preserveAspectRatio="none"><path d="M0 14Q6 13 9 6T15 .5H134.500Q136.500 .5 136.500 3V14" fill="#fbfcff" stroke="#8fa3c4"/></svg>${ic("flange")}<b>Крышка специальная.grb</b>${x}</button>
                <span class="grow"></span><button class="ar" aria-label="Документы">${tri}</button>
              </div>
              <div class="views"><cad-drawing></cad-drawing><cad-scene></cad-scene></div>
            </div>
          </div>
          <cad-variables class="vars" .rows=${rows}></cad-variables>
        </div>
        <div class="tools"><div class="dots"></div>${side.map((n) => btn(n, n === "mag1" || n === "feet1" ? "b on" : "b"))}<div class="foot"><svg viewBox="0 0 5 5"><path d="M0 0v5M2 0l3 2.500L2 5z" stroke="#111" stroke-width=".8"/></svg></div></div>
      </main>
      <footer class="status"><span>&gt;</span><span class="grow"></span><span>Грань</span><span class="grow"></span><span class="cell"></span><span class="cell"></span><span class="cell"></span></footer>
      <div class="taskbar"><span class="gap"><i class="chip pale"></i></span>${task("yellow")}${task("pale")}${["", "", "", ""].map(() => task("yellow"))}<span class="gap"></span>${task("yellow")}${task("blue")}<span class="gap big"><i class="chip dark"></i><i class="chip pale"></i><i class="chip amber"></i></span>${task("pale")}<span class="gap"><i class="chip red"></i></span>${task("blue", "light")}${task("pink")}<span class="gap big"></span></div>`;
  }
}
